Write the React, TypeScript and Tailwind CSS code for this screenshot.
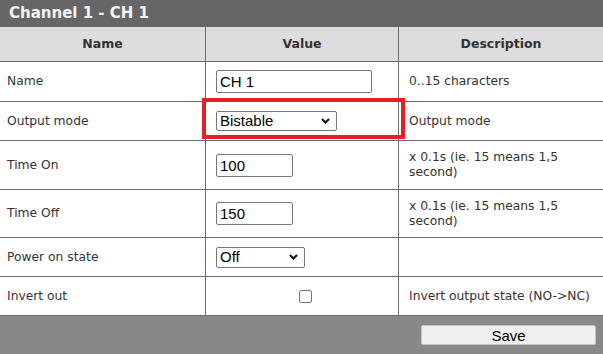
import React from "react";

const Chevron = () => (
  <svg width="9" height="6" viewBox="0 0 9 6" fill="none" className="absolute right-[6px] top-1/2 -translate-y-1/2 pointer-events-none">
    <path d="M1 1L4.5 4.5L8 1" stroke="#111" strokeWidth="2" />
  </svg>
);

const Select: React.FC<{ value: string; width: string; height: string }> = ({ value, width, height }) => (
  <div className={`relative ${width} ${height} border border-[#767676] rounded-[2px] bg-white flex items-center pl-[3px] text-[15px] text-black font-['Liberation_Sans',Arial,sans-serif]`}>
    <span>{value}</span>
    <Chevron />
  </div>
);

const Input: React.FC<{ value: string; width: string }> = ({ value, width }) => (
  <input
    readOnly
    value={value}
    className={`${width} h-[23px] border border-[#767676] rounded-[2px] bg-white px-[3px] text-[15px] text-black outline-none font-['Liberation_Sans',Arial,sans-serif]`}
  />
);

type Row = { label: string; value: React.ReactNode; desc: React.ReactNode; h: string; highlight?: boolean };

const rows: Row[] = [
  { label: "Name", value: <Input value="CH 1" width="w-[156px]" />, desc: "0..15 characters", h: "h-[40px]" },
  { label: "Output mode", value: <Select value="Bistable" width="w-[121px]" height="h-[20px]" />, desc: "Output mode", h: "h-[39px]", highlight: true },
  { label: "Time On", value: <Input value="100" width="w-[77px]" />, desc: <>x 0.1s (ie. 15 means 1,5<br />second)</>, h: "h-[49px]" },
  { label: "Time Off", value: <Input value="150" width="w-[77px]" />, desc: <>x 0.1s (ie. 15 means 1,5<br />second)</>, h: "h-[48px]" },
  { label: "Power on state", value: <Select value="Off" width="w-[89px]" height="h-[21px]" />, desc: "", h: "h-[39px]" },
  {
    label: "Invert out",
    value: (
      <div className="w-full flex justify-center pr-[4px]">
        <span className="block w-[13px] h-[13px] border border-[#767676] rounded-[2px] bg-white" />
      </div>
    ),
    desc: "Invert output state (NO->NC)",
    h: "h-[39px]",
  },
];

export default function App() {
  return (
    <div className="w-[603px] h-[354px] bg-white overflow-hidden font-['DejaVu_Sans',Verdana,sans-serif] text-[12.3px] text-[#333]">
      <div className="h-[27px] bg-[#666] flex items-center pl-[9px] text-[15px] font-bold text-[#f4f4f4]">
        Channel 1 - CH 1
      </div>
      <div className="h-[35px] flex bg-[#ddd] border-b border-[#6b6b6b] font-bold text-[12.5px]">
        <div className="w-[206px] border-r border-[#6b6b6b] flex items-center justify-center">Name</div>
        <div className="w-[193px] border-r border-[#6b6b6b] flex items-center justify-center">Value</div>
        <div className="flex-1 flex items-center justify-center">Description</div>
      </div>
      {rows.map((r) => (
        <div key={r.label} className={`${r.h} flex border-b border-[#6b6b6b]`}>
          <div className="w-[206px] border-r border-[#6b6b6b] flex items-center pl-[7px]">{r.label}</div>
          <div className="relative w-[193px] border-r border-[#6b6b6b] flex items-center pl-[10px]">
            {r.value}
            {r.highlight && (
              <div className="absolute -left-[4px] -top-[4px] w-[203px] h-[41px] border-4 border-[#e81d25]" />
            )}
          </div>
          <div className="flex-1 flex items-center pl-[10px] leading-[15px]">
            <div>{r.desc}</div>
          </div>
        </div>
      ))}
      <div className="h-[38px] bg-[#888] flex items-center justify-end pr-[7px]">
        <button className="w-[175px] h-[20px] bg-[#efefef] border border-[#c4c4c4] rounded-[2px] text-[15px] text-black font-['Liberation_Sans',Arial,sans-serif] leading-none">
          Save
        </button>
      </div>
    </div>
  );
}
